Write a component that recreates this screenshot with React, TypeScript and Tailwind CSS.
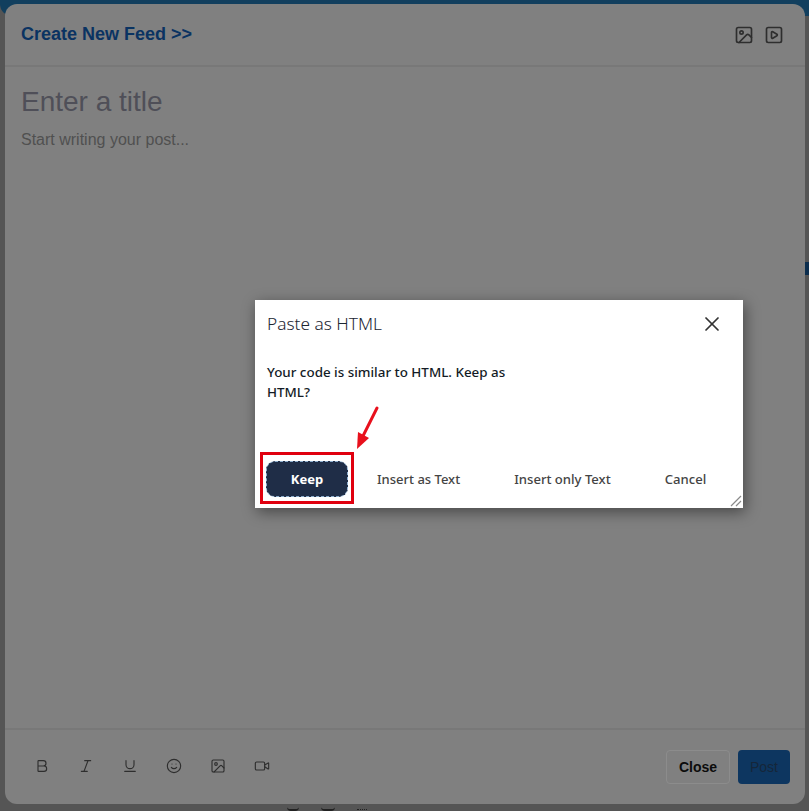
import { Bold, Italic, Underline, Smile, Image, Video, SquarePlay, X } from "lucide-react";

const toolbarIcons = [Bold, Italic, Underline, Smile, Image, Video];

export default function App() {
  return (
    <div className="relative h-[811px] w-[809px] overflow-hidden bg-[#555555] font-['Liberation_Sans',sans-serif]">
      {/* page behind the overlay */}
      <div className="h-[16px] rounded-bl-[12px] bg-[#123f5e]" />
      <div className="absolute right-0 top-[262px] h-[13px] w-[4px] bg-[#0c2e4e]" />
      <div className="absolute bottom-0 left-[287px] flex gap-[22px]">
        <div className="h-[4px] w-[12px] rounded-b-full border-b-2 border-[#222222]" />
        <div className="h-[4px] w-[14px] rounded-b-full border-b-2 border-[#222222]" />
        <div className="h-[3px] w-[10px] border-b border-dotted border-[#222222]" />
      </div>

      {/* feed modal */}
      <div className="absolute left-[5px] top-[4px] flex h-[800px] w-[800px] flex-col rounded-[12px] bg-[#808080]">
        <div className="flex h-[63px] shrink-0 items-center justify-between border-b-2 border-[#787878] pl-[16px] pr-[21px]">
          <h1 className="text-[18px] font-bold text-[#0a3362]">Create New Feed &gt;&gt;</h1>
          <div className="flex items-center gap-[10px] text-[#2e2e2e]">
            <Image size={20} strokeWidth={2} />
            <SquarePlay size={20} strokeWidth={2} />
          </div>
        </div>

        <div className="flex-1 px-[16px] pt-[18px]">
          <div className="text-[28px] leading-[34px] text-[#4f4f58]">Enter a title</div>
          <div className="mt-[12px] text-[16px] leading-[18px] text-[#505050]">Start writing your post...</div>
        </div>

        <div className="flex h-[76px] shrink-0 items-center justify-between border-t-2 border-[#787878] pl-[29px] pr-[15px]">
          <div className="mb-[2px] flex items-center gap-[28px] text-[#2e2e2e]">
            {toolbarIcons.map((Icon, i) => (
              <Icon key={i} size={16} strokeWidth={1.7} />
            ))}
          </div>
          <div className="flex items-center gap-[8px]">
            <button className="h-[34px] w-[64px] rounded-[4px] border border-[#8c8c8c] text-[14px] font-bold text-[#0c0c0c]">Close</button>
            <button className="h-[34px] w-[52px] rounded-[4px] bg-[#0d3660] text-[14px] text-[#15263a]">Post</button>
          </div>
        </div>
      </div>

      {/* paste dialog */}
      <div className="absolute left-[255px] top-[300px] flex h-[208px] w-[488px] flex-col bg-white font-['Noto_Sans',sans-serif] shadow-[2px_4px_14px_rgba(0,0,0,0.45)]">
        <div className="flex items-center justify-between pl-[12px] pr-[19px] pt-[12px]">
          <span className="text-[17.3px] font-light leading-[24px] text-[#1c2632]">Paste as HTML</span>
          <X size={24} strokeWidth={1.7} className="text-[#333333]" />
        </div>
        <p className="mt-[26px] w-[274px] pl-[12px] text-[13.4px] font-medium leading-[20px] text-[#141c26]">
          Your code is similar to HTML. Keep as HTML?
        </p>
        <div className="mt-auto flex items-center pb-[11px] pl-[11px] text-[13px] font-medium text-[#444444]">
          <button className="h-[36px] w-[82px] rounded-[9px] border border-dashed border-[#8fb0d0] bg-[#1f2d47] pt-[1px] font-bold text-white">Keep</button>
          <span className="ml-[29px] mt-[1px]">Insert as Text</span>
          <span className="ml-[54px] mt-[1px] text-[13.1px]">Insert only Text</span>
          <span className="ml-[54px] mt-[1px] text-[13.1px]">Cancel</span>
        </div>
        <svg className="absolute bottom-[1px] right-[1px]" width="12" height="12" viewBox="0 0 12 12" fill="none" stroke="#8a8a8a" strokeWidth="1.2">
          <path d="M1 11 11 1M6 11l5-5" />
        </svg>
      </div>

      {/* annotation */}
      <div className="absolute left-[260px] top-[452px] h-[52px] w-[94px] border-[3px] border-[#e0000f]" />
      <svg className="absolute left-[350px] top-[400px]" width="36" height="54" viewBox="0 0 36 54" fill="none">
        <path d="M27 8 12 38" stroke="#e8101c" strokeWidth="3" strokeLinecap="round" />
        <path d="M7 49 8 32l11 6z" fill="#e8101c" />
      </svg>
    </div>
  );
}
